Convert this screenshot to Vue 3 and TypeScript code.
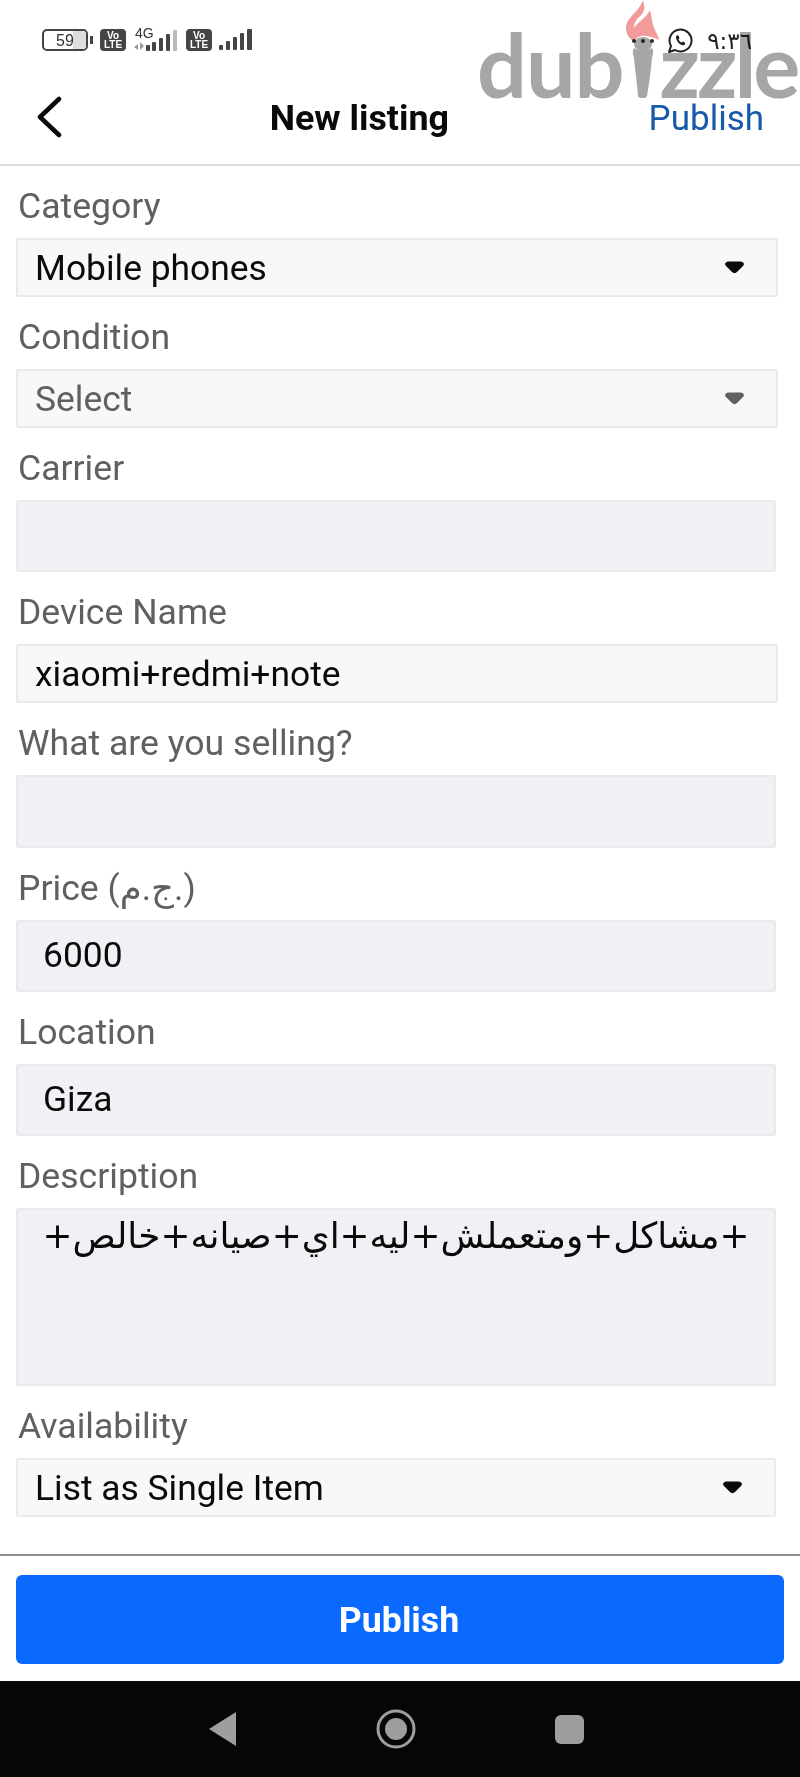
<script setup lang="ts">
interface Field {
  label: string
  kind: 'select' | 'input' | 'area'
  value?: string
  placeholder?: boolean
  wide?: boolean
  height: number
}
const fields: Field[] = [
  { label: 'Category', kind: 'select', value: 'Mobile phones', wide: true, height: 59 },
  { label: 'Condition', kind: 'select', value: 'Select', placeholder: true, wide: true, height: 59 },
  { label: 'Carrier', kind: 'input', height: 72 },
  { label: 'Device Name', kind: 'select', value: 'xiaomi+redmi+note', wide: true, height: 59 },
  { label: 'What are you selling?', kind: 'input', height: 73 },
  { label: 'Price (ج.م.)', kind: 'input', value: '6000', height: 72 },
  { label: 'Location', kind: 'input', value: 'Giza', height: 72 },
  { label: 'Description', kind: 'area', value: '+مشاكل+ومتعملش+ليه+اي+صيانه+خالص+', height: 178 },
  { label: 'Availability', kind: 'select', value: 'List as Single Item', height: 59 },
]
const hasCaret = (f: Field) => f.kind === 'select' && f.label !== 'Device Name'
</script>

<template>
  <div class="page">
    <header class="head">
      <div class="status">
        <div class="status-left">
          <div class="battery"><span class="batt-num">59</span><i class="batt-fill"></i></div>
          <i class="batt-tip"></i>
          <div class="volte"><span>Vo</span><span>LTE</span></div>
          <div class="net">
            <span class="net-4g">4G</span>
            <svg width="46" height="22" viewBox="0 0 46 22">
              <path d="M1 17l4-3v6zM7 12l4 4-4 4z" fill="#999" />
              <rect x="13" y="15" width="4" height="6" rx="1" fill="#444" />
              <rect x="19" y="12" width="4" height="9" rx="1" fill="#444" />
              <rect x="26" y="8" width="4" height="13" rx="1" fill="#444" />
              <rect x="33" y="4" width="4" height="17" rx="1" fill="#444" />
              <rect x="40" y="0" width="4" height="21" rx="1" fill="#bbb" />
            </svg>
          </div>
          <div class="volte"><span>Vo</span><span>LTE</span></div>
          <svg class="bars" width="34" height="22" viewBox="0 0 34 22">
            <rect x="0" y="16" width="4" height="5" rx="1" fill="#444" />
            <rect x="7" y="12" width="4" height="9" rx="1" fill="#444" />
            <rect x="14" y="8" width="4" height="13" rx="1" fill="#444" />
            <rect x="21" y="4" width="4" height="17" rx="1" fill="#444" />
            <rect x="28" y="0" width="5" height="21" rx="1" fill="#444" />
          </svg>
        </div>
        <div class="status-right">
          <span class="dots"><i></i><i></i><i></i></span>
          <svg class="wa" width="26" height="26" viewBox="0 0 26 26" fill="none">
            <path d="M2 24l2-6a11 11 0 1 1 4 4z" stroke="#222" stroke-width="2" fill="#fff" stroke-linejoin="round" />
            <path d="M9 8c1-1 2-1 2.500 0l1 2-1 1.500c.8 1.500 1.700 2.300 3 3l1.500-1 2 1.200c.5.800 0 2-1 2.500-3 .8-8.500-4-8-9z" fill="#222" />
          </svg>
          <span class="time" dir="rtl">٩:٣٦</span>
        </div>
      </div>
      <div class="nav">
        <svg class="back" width="26" height="44" viewBox="0 0 26 44" fill="none">
          <path d="M23 4L4 22l19 18" stroke="#0a0a0a" stroke-width="4.500" stroke-linecap="round" stroke-linejoin="round" />
        </svg>
        <h1 class="title">New listing</h1>
        <span class="publish-link">Publish</span>
      </div>
    </header>

    <main class="form">
      <div v-for="f in fields" :key="f.label" class="row">
        <label class="label">{{ f.label }}</label>
        <div
          class="control"
          :class="[f.kind, { wide: f.wide, muted: f.placeholder }]"
          :style="{ height: f.height + 'px' }"
        >
          <span v-if="f.kind === 'area'" class="area-text" dir="rtl">{{ f.value }}</span>
          <span v-else-if="f.value">{{ f.value }}</span>
          <svg v-if="hasCaret(f)" class="caret" width="21" height="13" viewBox="0 0 21 13">
            <path d="M5 .5h11c3.500 0 5 2.500 3 4.500l-6 6c-1.500 1.500-3.500 1.500-5 0L2 5C0 3 1.500.5 5 .5z" fill="currentColor" />
          </svg>
        </div>
      </div>
    </main>

    <footer class="foot">
      <button class="publish-btn" type="button">Publish</button>
    </footer>

    <nav class="sysnav">
      <svg width="28" height="34" viewBox="0 0 28 34"><path d="M27 0v34L0 17z" fill="#9e9e9e" /></svg>
      <svg width="40" height="40" viewBox="0 0 40 40" fill="none">
        <circle cx="20" cy="20" r="18" stroke="#9e9e9e" stroke-width="3" />
        <circle cx="20" cy="20" r="11" fill="#9e9e9e" />
      </svg>
      <span class="sq"></span>
    </nav>

    <div class="watermark" aria-label="dubizzle">
      <span class="wm-a">dub</span>
      <svg class="wm-i" width="36" height="100" viewBox="0 0 36 100">
        <path d="M19 2C20 8 22 11 18 16C15 20 10 22 10 30C14 24 22 20 26 12C28 20 28 26 31 32C33 36 35 40 35 42C30 40 24 37 17 38C13 39 11 41 10 44C5 40 2 36 2 30C2 22 10 16 14 11C16 8 18 5 19 2Z" fill="#f29b9b" />
        <ellipse cx="19" cy="46" rx="9" ry="7" fill="#a6a6a6" />
        <path d="M10 50c5 3 13 3 18 0 2 3 1 6 0 10-1 12-3 26-5 38-1 3-8 3-9 0-1-14-3-26-4-38-1-4-2-7 0-10z" fill="#a6a6a6" />
      </svg>
      <span class="wm-b">zzle</span>
    </div>
  </div>
</template>

<style>
html, body { margin: 0; padding: 0; background: #fff; }
</style>

<style scoped>
.page {
  position: relative;
  width: 800px;
  height: 1777px;
  overflow: hidden;
  background: #fff;
  display: flex;
  flex-direction: column;
  font-family: Roboto, "DejaVu Sans", sans-serif;
}
.head {
  height: 166px;
  box-sizing: border-box;
  border-bottom: 2px solid #dcdcdc;
  display: flex;
  flex-direction: column;
}
.status {
  height: 80px;
  padding: 29px 48px 0 42px;
  box-sizing: border-box;
  display: flex;
  justify-content: space-between;
}
.status-left { display: flex; align-items: flex-start; }
.battery {
  position: relative;
  width: 46px;
  height: 22px;
  border: 2px solid #444;
  border-radius: 5px;
  box-sizing: border-box;
  overflow: hidden;
  text-align: center;
}
.batt-fill { position: absolute; right: 0; top: 0; bottom: 0; width: 13px; background: #ddd; }
.batt-num { position: relative; z-index: 1; font: 16px/18px "Liberation Sans", sans-serif; color: #333; }
.batt-tip { width: 3px; height: 8px; background: #444; margin: 7px 0 0 2px; }
.volte {
  width: 26px;
  height: 22px;
  margin-left: 7px;
  background: #444;
  border-radius: 4px;
  color: #fff;
  font: 700 10px/9px "Liberation Sans", sans-serif;
  display: flex;
  flex-direction: column;
  align-items: center;
  justify-content: center;
}
.net { position: relative; width: 46px; height: 22px; margin-left: 7px; }
.net svg { position: absolute; left: 0; top: 1px; }
.net-4g { position: absolute; left: 2px; top: -3px; font: 14px/14px "Liberation Sans", sans-serif; color: #333; }
.bars { margin: 0 0 0 7px; }
.status-right { display: flex; align-items: center; height: 26px; margin-top: -1px; }
.dots { display: flex; gap: 5px; margin-right: 13px; }
.dots i { width: 4px; height: 4px; border-radius: 50%; background: #333; }
.wa { margin-right: 14px; }
.time { font: 23px/26px "DejaVu Sans", sans-serif; color: #222; }
.nav {
  flex: 1;
  display: flex;
  align-items: center;
  position: relative;
  padding: 0 36px 10px 36px;
}
.back { flex: none; }
.title {
  flex: 1;
  margin: 0;
  padding: 1px 0 0 8px;
  text-align: center;
  font-size: 35.800px;
  font-weight: 700;
  color: #0a0a0a;
}
.publish-link { font-size: 35px; color: #1859a9; padding-top: 2px; }
.form { flex: 1; padding: 0 16px; }
.row { display: flex; flex-direction: column; }
.label {
  height: 72px;
  line-height: 80px;
  font-size: 35.600px;
  color: #5f6062;
  padding-left: 2px;
  white-space: nowrap;
}
.control {
  box-sizing: border-box;
  width: 760px;
  background: #f7f8f9;
  border: 2px solid #e9eaec;
  border-radius: 2px;
  font-size: 35.400px;
  color: #0a0a0a;
  display: flex;
  align-items: center;
  padding: 1px 18px 0 17px;
  position: relative;
}
.control.wide { width: 762px; }
.control.input { background: #f0f1f5; padding: 0 18px 3px 25px; }
.control.muted { color: #606060; }
.control.area { background: #f0f1f5; align-items: flex-start; padding: 2px 14px 0 14px; }
.area-text { width: 100%; text-align: center; font-family: "DejaVu Sans", sans-serif; font-size: 35.800px; line-height: 48px; white-space: nowrap; }
.caret { position: absolute; right: 31px; top: 50%; margin-top: -7px; }
.foot {
  height: 127px;
  box-sizing: border-box;
  border-top: 2px solid #8e8e8e;
  padding: 19px 16px 0;
  background: #fff;
}
.publish-btn {
  display: block;
  width: 768px;
  height: 89px;
  border: 0;
  border-radius: 6px;
  background: #0a69ff;
  color: #fff;
  font: 700 35.700px Roboto, sans-serif;
  padding: 0 2px 0 0;
}
.sysnav {
  height: 96px;
  background: #060606;
  display: flex;
  align-items: center;
  position: relative;
  justify-content: center;
  gap: 139px;
  padding-right: 7px;
}
.sq { width: 29px; height: 29px; border-radius: 6px; background: #9e9e9e; }
.watermark {
  position: absolute;
  left: 477px;
  top: -2px;
  display: flex;
  align-items: baseline;
  font: 700 88px/1 Lato, sans-serif;
  color: #a6a6a6;
  white-space: nowrap;
  pointer-events: none;
  mix-blend-mode: multiply;
}
.wm-a { letter-spacing: -1px; }
.wm-b { letter-spacing: -3px; }
.wm-i { flex: none; }
</style>
